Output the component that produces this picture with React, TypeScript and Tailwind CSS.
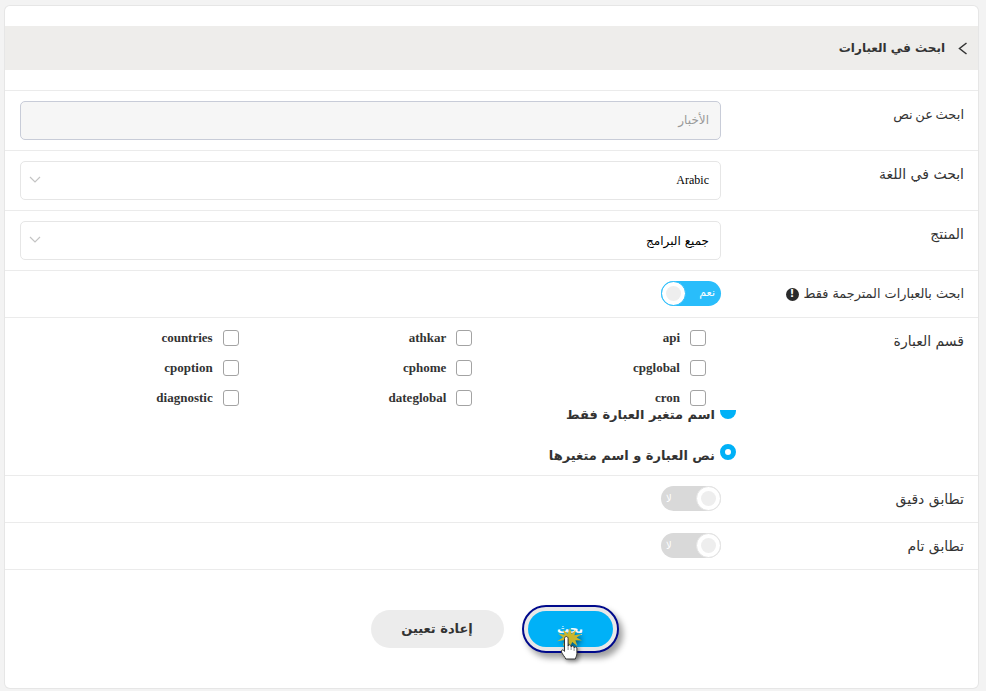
import React from 'react';

const sections = ['api', 'athkar', 'countries', 'cpglobal', 'cphome', 'cpoption', 'cron', 'dateglobal', 'diagnostic'];

const Chevron = () => (
  <svg width="12" height="8" viewBox="0 0 12 8" fill="none" stroke="#c4c4c4" strokeWidth="1.2">
    <path d="M1 1l5 5 5-5" />
  </svg>
);

const Row: React.FC<{ label: React.ReactNode; className: string; children: React.ReactNode }> = ({ label, className, children }) => (
  <div className={`flex border-b border-[#ebebeb] ${className}`}>
    <div className="w-[257px] shrink-0 pr-[14px] pt-[11px] text-[14px] leading-[24px] text-[#333]">{label}</div>
    <div className="w-[701px]">{children}</div>
  </div>
);

const Toggle: React.FC<{ on?: boolean }> = ({ on }) =>
  on ? (
    <div className="flex h-[25px] w-[60px] items-center justify-between rounded-full bg-[#29bdfb] pr-[6px]">
      <span className="text-[11px] text-white">نعم</span>
      <span className="flex h-[25px] w-[25px] items-center justify-center rounded-full border border-[#29bdfb] bg-white">
        <span className="h-[15px] w-[15px] rounded-full bg-[#eeeeee]" />
      </span>
    </div>
  ) : (
    <div className="flex h-[25px] w-[60px] items-center justify-between rounded-full bg-[#d9d9d9] pl-[5px]">
      <span className="flex h-[25px] w-[25px] items-center justify-center rounded-full border border-[#e4e4e4] bg-white">
        <span className="h-[15px] w-[15px] rounded-full bg-[#eeeeee]" />
      </span>
      <span className="text-[10px] text-white">لا</span>
    </div>
  );

const HandCursor = () => (
  <svg
    width="32"
    height="40"
    viewBox="0 0 32 40"
    className="absolute top-[22px] left-[34px] drop-shadow-[2px_2px_2px_rgba(0,0,0,0.45)]"
  >
    <path
      d="M14 1l1.5 6L20 3l-1.6 5.2L26 7l-5.4 3.6 5.4 2.8-6.6-.2 2 5.8-5.2-4L14 20l-2.2-5-5 4 1.8-6-7.6 1.2 6-3.6L2 6.6l6.6 1.2L7 2.6l4.6 4.2z"
      fill="#c9b62c"
    />
    <path
      d="M8.5 11.5c0-2.6 3.6-2.6 3.6 0V19c0-1.6 3-1.6 3 0v1c0-1.5 3-1.5 3 0v1c0-1.4 2.8-1.4 2.8 0v5.5c0 2.5-1 3.2-1.6 5.5H9.8c-.8-2-3.3-4.5-4.3-7-.7-1.7 1-2.8 2.2-1.6l.8 1z"
      fill="#fff"
      stroke="#333"
      strokeWidth="1"
    />
    <path d="M12.1 19v4M15.1 20v3M18.1 21v3" fill="none" stroke="#777" strokeWidth="0.8" />
  </svg>
);

const App: React.FC = () => {
  return (
    <div dir="rtl" className="h-[691px] overflow-hidden bg-[#f3f3f3] pt-[6px] pl-[5px] pr-[8px] font-['DejaVu_Sans',sans-serif]">
      <div className="h-[682px] rounded-[5px] bg-white pt-[20px] ring-1 ring-[#e6e6e6]">
        <div className="flex h-[44px] items-center bg-[#eeedeb] pr-[10px] text-[12px] font-bold text-[#333]">
          <svg width="10" height="13" viewBox="0 0 10 13" fill="none" stroke="#333" strokeWidth="1.5" className="ml-[13px]">
            <path d="M8.5 1L1.5 6.5l7 5.5" />
          </svg>
          ابحث في العبارات
        </div>
        <div className="mt-[20px] border-t border-[#ebebeb]">
          <Row label={<span className="text-[13px] [word-spacing:-1.5px]">ابحث عن نص</span>} className="h-[60px]">
            <div className="mt-[10px] flex h-[39px] items-center rounded-[5px] border border-[#c8ccd8] bg-[#f6f6f6] px-[11px] pb-[2px] text-[12px] text-[#999]">
              الأخبار
            </div>
          </Row>
          <Row label="ابحث في اللغة" className="h-[60px]">
            <div className="mt-[10px] flex h-[39px] items-center justify-between rounded-[5px] border border-[#e6e6e6] pr-[11px] pl-[8px] pb-[2px] font-['Liberation_Serif',serif] text-[12px] text-black">
              Arabic
              <Chevron />
            </div>
          </Row>
          <Row label="المنتج" className="h-[60px]">
            <div className="mt-[10px] flex h-[39px] items-center justify-between rounded-[5px] border border-[#e6e6e6] pr-[11px] pl-[8px] pb-[2px] text-[12px] text-black">
              <span className="mt-[2px]">جميع البرامج</span>
              <Chevron />
            </div>
          </Row>
          <Row
            label={
              <span className="flex items-center gap-[5px] text-[12.85px]">
                ابحث بالعبارات المترجمة فقط
                <span className="flex h-[13px] w-[13px] items-center justify-center rounded-full bg-[#2b2b2b] text-[10px] font-bold text-white">!</span>
              </span>
            }
            className="h-[47px]"
          >
            <div className="pt-[10px]"><Toggle on /></div>
          </Row>
          <Row label="قسم العبارة" className="h-[158px]">
            <div className="grid h-[92px] grid-cols-3 content-start pt-[5px] font-['Liberation_Serif',serif] text-[13px] font-bold text-[#333]">
              {sections.map((s) => (
                <div key={s} className="flex h-[30px] items-center gap-[10px] pr-[15px]">
                  <span className="h-[16px] w-[16px] rounded-[3px] border border-[#a3a3a3] bg-white" />
                  {s}
                </div>
              ))}
            </div>
            {/* the list above scrolls over the first radio in the original, so it is cut here */}
            <div className="mr-[-15px] h-[60px] overflow-hidden text-[13px] font-bold text-[#333]">
              <div className="-mt-[7px] flex flex-col gap-[25px]">
                <div className="flex h-[16px] gap-[5px]">
                  <span className="h-[16px] w-[16px] rounded-full bg-[#00b1f7]" />
                  <span className="mt-[4px] leading-[16px]">اسم متغير العبارة فقط</span>
                </div>
                <div className="flex h-[16px] gap-[5px]">
                  <span className="h-[16px] w-[16px] rounded-full border-[5px] border-[#00b1f7] bg-white" />
                  <span className="mt-[4px] leading-[16px]">نص العبارة و اسم متغيرها</span>
                </div>
              </div>
            </div>
          </Row>
          <Row label="تطابق دقيق" className="h-[47px]">
            <div className="pt-[10px]"><Toggle /></div>
          </Row>
          <Row label="تطابق تام" className="h-[47px]">
            <div className="pt-[10px]"><Toggle /></div>
          </Row>
        </div>
        <div className="mt-[35px] flex items-center justify-center gap-[18px] pl-[6px]">
          <div className="relative">
            <button className="flex h-[48px] w-[97px] items-center justify-center rounded-full border-2 border-[#000a8c] bg-[#e8e8e8] p-[4px] shadow-[4px_5px_6px_#a0a0a0]">
              <span className="flex h-full w-full items-center justify-center rounded-full bg-[#00b1f7] text-[12px] font-bold text-white">بحث</span>
            </button>
            <HandCursor />
          </div>
          <button className="h-[38px] w-[133px] rounded-full bg-[#ececec] text-[13px] font-bold text-[#333]">إعادة تعيين</button>
        </div>
      </div>
    </div>
  );
};

export default App;
